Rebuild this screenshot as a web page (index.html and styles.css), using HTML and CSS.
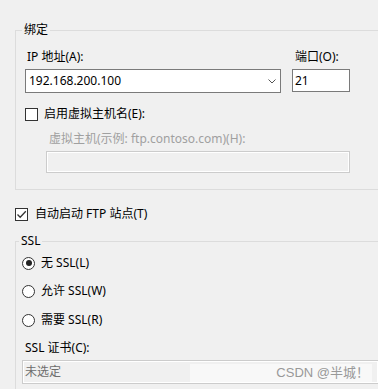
FILE: index.html
```html
<!DOCTYPE html>
<html>
<head>
  <title>FTP 站点绑定和 SSL 设置</title>
  <link rel="stylesheet" href="styles.css">
</head>
<body>
  <fieldset class="group binding">
    <legend>绑定</legend>
    <div class="row">
      <div class="field ip">
        <div class="label">IP 地址(A):</div>
        <div class="combo">
          <span>192.168.200.100</span>
          <svg width="8" height="5" viewBox="0 0 8 5"><path d="M0.5 0.5 L4 4 L7.5 0.5" fill="none" stroke="#555" stroke-width="1"/></svg>
        </div>
      </div>
      <div class="field port">
        <div class="label">端口(O):</div>
        <div class="textbox">21</div>
      </div>
    </div>
    <div class="check">
      <span class="box"></span>
      <span>启用虚拟主机名(E):</span>
    </div>
    <div class="host">
      <div class="label disabled">虚拟主机(示例: ftp.contoso.com)(H):</div>
      <div class="textbox off"></div>
    </div>
  </fieldset>

  <div class="check autostart">
    <span class="box">
      <svg width="11" height="11" viewBox="0 0 11 11"><path d="M1.5 5.5 L4.2 8.3 L9.8 2.3" fill="none" stroke="#333" stroke-width="1.3"/></svg>
    </span>
    <span>自动启动 FTP 站点(T)</span>
  </div>

  <fieldset class="group ssl">
    <legend>SSL</legend>
    <div class="radio"><span class="dot on"></span><span>无 SSL(L)</span></div>
    <div class="radio second"><span class="dot"></span><span>允许 SSL(W)</span></div>
    <div class="radio third"><span class="dot"></span><span>需要 SSL(R)</span></div>
    <div class="label cert-label">SSL 证书(C):</div>
    <div class="textbox off cert">未选定</div>
  </fieldset>

  <div class="watermark">CSDN @半城！</div>
</body>
</html>
```

FILE: styles.css
```css
html {
  overflow: hidden;
}
body {
  margin: 0;
  background: #f0f0f0;
  font-family: "Noto Sans", "Noto Sans CJK SC", sans-serif;
  font-size: 12px;
  line-height: 16px;
  color: #000;
  overflow: hidden;
  position: relative;
  height: 389px;
}
/* group boxes run on past the right edge of the window */
.group {
  margin: 0 0 0 15px;
  border: 1px solid #dcdcdc;
  border-right: 0;
  min-width: 0;
}
.group legend {
  padding: 0 2px;
  margin-left: -3px;
  line-height: 16px;
}
.binding {
  margin-top: 22px;
  padding: 11px 0 16px 9px;
}
.row {
  display: flex;
  gap: 11px;
}
.field.ip {
  width: 256px;
}
.field.port {
  width: 58px;
}
.label {
  padding-left: 2px;
  margin-bottom: 4px;
}
.port .label {
  padding-left: 3px;
}
.combo {
  height: 24px;
  box-sizing: border-box;
  border: 1px solid #7a7a7a;
  background: #fff;
  padding: 0 4px 0 3px;
  display: flex;
  align-items: center;
  justify-content: space-between;
}
.textbox {
  height: 23px;
  box-sizing: border-box;
  border: 1px solid #7a7a7a;
  background: #fff;
  padding-left: 2px;
  line-height: 21px;
}
.check {
  display: flex;
  align-items: center;
  gap: 6px;
  height: 16px;
  margin-top: 13px;
}
.box {
  width: 13px;
  height: 13px;
  box-sizing: border-box;
  border: 1px solid #333;
  background: #fff;
  display: flex;
  align-items: center;
  justify-content: center;
}
.host {
  margin: 9px 0 0 21px;
  width: 304px;
}
.label.disabled {
  color: #a0a0a0;
  padding-left: 3px;
}
.textbox.off {
  height: 22px;
  border-color: #cccccc;
  background: #f0f0f0;
  box-shadow: inset 0 0 0 1px #fff;
}
.autostart {
  margin: 16px 0 0 15px;
  gap: 7px;
}
.ssl {
  margin-top: 11px;
  padding: 6px 0 20px 6px;
}
.radio {
  display: flex;
  align-items: center;
  gap: 6px;
  height: 16px;
}
.radio.second {
  margin-top: 12px;
}
.radio.third {
  margin-top: 13px;
}
.dot {
  width: 13px;
  height: 13px;
  box-sizing: border-box;
  border: 1px solid #333;
  border-radius: 50%;
  background: #fff;
  display: flex;
  align-items: center;
  justify-content: center;
}
.dot.on::after {
  content: "";
  width: 6px;
  height: 6px;
  border-radius: 50%;
  background: #222;
}
.cert-label {
  margin-top: 12px;
  padding-left: 3px;
}
.textbox.cert {
  height: 24px;
  line-height: 22px;
  color: #6d6d6d;
  padding-left: 2px;
  border-right: 0;
}
.watermark {
  position: absolute;
  left: 190px;
  top: 364px;
  width: 182px;
  height: 18px;
  box-sizing: border-box;
  padding-right: 3px;
  background: #f8f8f8;
  color: #999;
  font-family: "Liberation Sans", "Noto Sans CJK SC", sans-serif;
  font-size: 13px;
  line-height: 18px;
  text-align: right;
}
```
